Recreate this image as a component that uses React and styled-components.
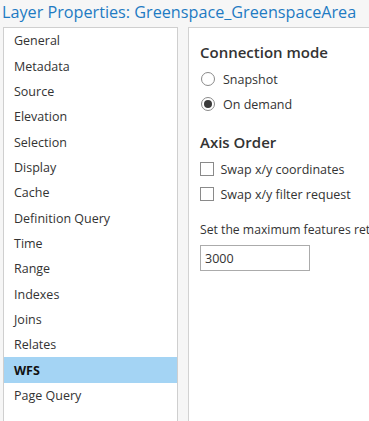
import React from "react";
import styled, { createGlobalStyle } from "styled-components";

const Global = createGlobalStyle`
  html, body { margin: 0; padding: 0; }
  body {
    background: #f6f6f6;
    font-family: "Open Sans", "Noto Sans", sans-serif;
    overflow: hidden;
  }
`;

const Window = styled.div`
  width: 369px;
  height: 421px;
  display: flex;
  flex-direction: column;
  overflow: hidden;
`;

const Title = styled.div`
  height: 27px;
  padding-left: 2px;
  box-sizing: border-box;
  color: #1e7bc3;
  font-size: 16.2px;
  line-height: 24px;
  white-space: nowrap;
`;

const Body = styled.div`
  flex: 1;
  display: flex;
  padding-left: 3px;
  gap: 10px;
  min-height: 0;
`;

const NavList = styled.ul`
  width: 175px;
  box-sizing: border-box;
  margin: 0;
  padding: 0;
  list-style: none;
  background: #fff;
  border: 1px solid #cfcfcf;
  border-bottom: none;
`;

const NavItem = styled.li`
  height: 25.35px;
  display: flex;
  align-items: center;
  padding-left: 10px;
  font-size: 12.5px;
  color: ${(p) => (p.$active ? "#111" : "#333")};
  font-weight: ${(p) => (p.$active ? 700 : 400)};
  background: ${(p) => (p.$active ? "#a4d4f4" : "transparent")};
  white-space: nowrap;
`;

const Panel = styled.div`
  flex: 1;
  background: #fff;
  border: 1px solid #d2d2d2;
  border-right: none;
  border-bottom: none;
  padding-left: 11px;
  display: flex;
  flex-direction: column;
  min-width: 0;
  overflow: hidden;
`;

const Heading = styled.div`
  font-size: 15px;
  font-weight: 600;
  color: #333;
  line-height: 20px;
  margin-top: ${(p) => p.$top}px;
  white-space: nowrap;
`;

const OptionRow = styled.label`
  height: 25px;
  display: flex;
  align-items: center;
  gap: ${(p) => p.$gap}px;
  font-size: 12.5px;
  color: #333;
  white-space: nowrap;
  margin-top: ${(p) => p.$top || 0}px;
`;

const Radio = styled.input.attrs({ type: "radio" })`
  appearance: none;
  margin: 0 0 0 1px;
  width: 14px;
  height: 14px;
  border-radius: 50%;
  border: 1px solid #8a8a8a;
  box-sizing: border-box;
  background: #fff;
  display: grid;
  place-items: center;
  &:checked::after {
    content: "";
    width: 8px;
    height: 8px;
    border-radius: 50%;
    background: #3a3a3a;
  }
`;

const Checkbox = styled.input.attrs({ type: "checkbox" })`
  appearance: none;
  margin: 0;
  width: 14px;
  height: 14px;
  border: 1px solid #8a8a8a;
  box-sizing: border-box;
  background: #fff;
`;

const Note = styled.div`
  margin-top: 14.5px;
  line-height: 18px;
  font-size: 12.2px;
  color: #333;
  white-space: nowrap;
`;

const NumberInput = styled.input`
  margin-top: 6px;
  width: 110px;
  height: 26px;
  box-sizing: border-box;
  border: 1px solid #ababab;
  padding: 0 0 0 4px;
  font-family: inherit;
  font-size: 12.5px;
  color: #333;
  outline: none;
`;

const items = [
  "General",
  "Metadata",
  "Source",
  "Elevation",
  "Selection",
  "Display",
  "Cache",
  "Definition Query",
  "Time",
  "Range",
  "Indexes",
  "Joins",
  "Relates",
  "WFS",
  "Page Query",
];

export default function App() {
  return (
    <>
      <Global />
      <Window>
        <Title>Layer Properties: Greenspace_GreenspaceArea</Title>
        <Body>
          <NavList>
            {items.map((it) => (
              <NavItem key={it} $active={it === "WFS"}>
                {it}
              </NavItem>
            ))}
          </NavList>
          <Panel>
            <Heading $top={14}>Connection mode</Heading>
            <OptionRow $gap={8} $top={4.5}>
              <Radio name="mode" />
              Snapshot
            </OptionRow>
            <OptionRow $gap={8}>
              <Radio name="mode" defaultChecked />
              On demand
            </OptionRow>
            <Heading $top={15.5}>Axis Order</Heading>
            <OptionRow $gap={6.5} $top={4.5}>
              <Checkbox />
              Swap x/y coordinates
            </OptionRow>
            <OptionRow $gap={6.5}>
              <Checkbox />
              Swap x/y filter request
            </OptionRow>
            <Note>Set the maximum features returned</Note>
            <NumberInput defaultValue="3000" />
          </Panel>
        </Body>
      </Window>
    </>
  );
}
